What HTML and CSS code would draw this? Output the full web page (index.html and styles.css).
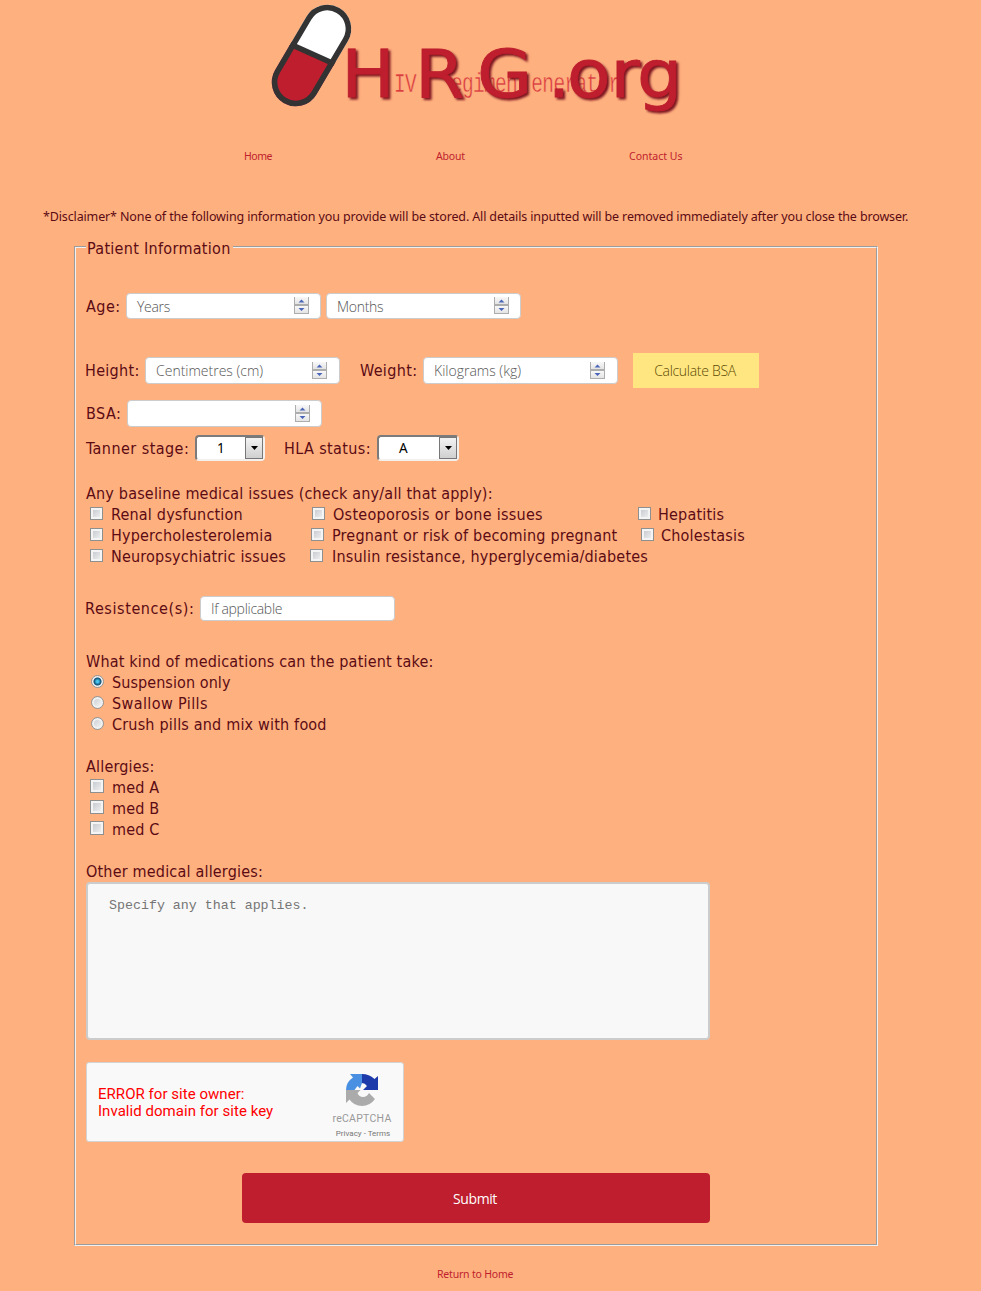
FILE: index.html
```html
<!DOCTYPE html>
<html lang="en">
<head>
<meta charset="utf-8">
<title>HRG.org - HIV Regimen Generator</title>
<link rel="stylesheet" href="styles.css">
</head>
<body>
<svg width="0" height="0" class="defs">
  <defs>
    <linearGradient id="btn" x1="0" y1="0" x2="0" y2="1"><stop offset="0" stop-color="#f8f8f8"/><stop offset="1" stop-color="#e4e4e4"/></linearGradient>
    <symbol id="spin" viewBox="0 0 15 17">
      <rect x="0" y="0" width="15" height="17" fill="#adadad"/>
      <rect x="1" y="0" width="13" height="7" fill="url(#btn)"/>
      <rect x="1" y="9" width="13" height="7" fill="url(#btn)"/>
      <path d="M4.500 5.500h6L7.500 2.500zM4.500 11h6L7.500 14z" fill="#4a66b8"/>
    </symbol>
  </defs>
</svg>
<header>
  <svg class="logo" width="430" height="120" viewBox="260 0 430 120">
    <defs><clipPath id="cap"><rect x="287.500" y="0.500" width="48" height="110" rx="24" transform="rotate(30.500 311.500 55.500)"/></clipPath></defs>
    <g clip-path="url(#cap)">
      <rect x="260" y="0" width="100" height="120" fill="#fff"/>
      <path d="M260 31L360 75V120H260z" fill="#be1e2d"/>
      <path d="M270 35L350 71" stroke="#333" stroke-width="5.500"/>
    </g>
    <rect x="290.300" y="3.300" width="42.400" height="104.400" rx="21.200" transform="rotate(30.500 311.500 55.500)" fill="none" stroke="#333" stroke-width="5.600"/>
    <text class="sub" transform="translate(0 92) scale(.72 1)" x="547.200 562.500 626.400 641.700 657 672.300 687.600 702.900 738 753.300 768.600 783.900 799.200 814.500 829.800 845.100">IVegimenenerator</text>
    <text class="brand" transform="translate(0 96.500) scale(1.080 1)" x="316 384.300 441.700 507 525 565.300 589.800">HRG.org</text>
  </svg>
</header>
<nav><a class="n1">Home</a><a class="n2">About</a><a class="n3">Contact Us</a></nav>
<p class="disclaimer"><span>*Disclaimer* None of the following information you provide will be stored. All details inputted will be removed immediately after you close the browser.</span></p>
<fieldset>
  <legend><span>Patient Information</span></legend>
  <div class="row age">
    <label class="l40"><span>Age:</span></label>
    <div class="field"><span>Years</span><svg><use href="#spin"/></svg></div>
    <div class="field second"><span>Months</span><svg><use href="#spin"/></svg></div>
  </div>
  <div class="row size">
    <label class="l59"><span>Height:</span></label>
    <div class="field"><span class="t-unit">Centimetres (cm)</span><svg><use href="#spin"/></svg></div>
    <label class="weight"><span>Weight:</span></label>
    <div class="field"><span class="t-unit">Kilograms (kg)</span><svg><use href="#spin"/></svg></div>
    <button class="calc"><span>Calculate BSA</span></button>
  </div>
  <div class="row bsa">
    <label class="l41"><span>BSA:</span></label>
    <div class="field"><span></span><svg><use href="#spin"/></svg></div>
  </div>
  <div class="row tanner">
    <label class="l109"><span>Tanner stage:</span></label>
    <div class="select s1"><span>1</span><i><svg width="7" height="4"><path d="M0 0h7L3.500 4z"/></svg></i></div>
    <label class="hla"><span>HLA status:</span></label>
    <div class="select s2"><span>A</span><i><svg width="7" height="4"><path d="M0 0h7L3.500 4z"/></svg></i></div>
  </div>
  <div class="issues">
    <div class="line"><span>Any baseline medical issues (check any/all that apply):</span></div>
    <div class="line"><div class="c1"><b class="box"></b><span>Renal dysfunction</span></div><div class="c2 o2"><b class="box"></b><span class="t-osteo">Osteoporosis or bone issues</span></div><div class="c3"><b class="box"></b><span>Hepatitis</span></div></div>
    <div class="line"><div class="c1"><b class="box"></b><span>Hypercholesterolemia</span></div><div class="c2 o1"><b class="box"></b><span>Pregnant or risk of becoming pregnant</span></div><div class="c3 o3"><b class="box"></b><span>Cholestasis</span></div></div>
    <div class="line"><div class="c1"><b class="box"></b><span>Neuropsychiatric issues</span></div><div class="c2"><b class="box wide"></b><span>Insulin resistance, hyperglycemia/diabetes</span></div></div>
  </div>
  <div class="row resist">
    <label class="l114"><span>Resistence(s):</span></label>
    <div class="field"><span>If applicable</span></div>
  </div>
  <div class="meds">
    <div class="line"><span>What kind of medications can the patient take:</span></div>
    <div class="line opt"><b class="radio on"></b><span class="t-susp">Suspension only</span></div>
    <div class="line opt"><b class="radio"></b><span class="t-swallow">Swallow Pills</span></div>
    <div class="line opt"><b class="radio"></b><span>Crush pills and mix with food</span></div>
  </div>
  <div class="allergies">
    <div class="line"><span>Allergies:</span></div>
    <div class="line opt"><b class="box big"></b><span>med A</span></div>
    <div class="line opt"><b class="box big"></b><span>med B</span></div>
    <div class="line opt"><b class="box big"></b><span>med C</span></div>
  </div>
  <div class="other">
    <div class="line"><span>Other medical allergies:</span></div>
    <div class="area"><span>Specify any that applies.</span></div>
  </div>
  <div class="captcha">
    <p><span>ERROR for site owner:</span><br><span>Invalid domain for site key</span></p>
    <div class="rc">
      <svg width="34" height="34" viewBox="0 0 34 34">
        <path d="M17 1H5l3 3.500Q1 9 1 17h8.500l3-4 2.500 2.500L17 10z" fill="#4a90e2"/>
        <path d="M17 1v9q3 0 5 3l-4 4h15V3l-3.500 3Q24 1 17 1z" fill="#1c3aa9"/>
        <path d="M1 17v13l3.500-3.500Q9 33 17 33q8 0 13-7l-6-6q-2 4-6 4-4 0-5.500-4l3-3z" fill="#ababab"/>
      </svg>
      <span class="name">reCAPTCHA</span>
      <span class="terms">Privacy - Terms</span>
    </div>
  </div>
  <button class="submit"><span>Submit</span></button>
</fieldset>
<footer><a>Return to Home</a></footer>
</body>
</html>
```
FILE: styles.css
```css
* { box-sizing: border-box; }
body { margin: 0; width: 981px; height: 1291px; overflow: hidden; background: #ffb07f; color: #5b0b14; font: 16px/21px "DejaVu Sans Condensed", "DejaVu Sans", sans-serif; letter-spacing: .19px; }
.defs { position: absolute; }
span { white-space: nowrap; }
header { height: 146px; padding-left: 260px; }
.logo { display: block; letter-spacing: 0; }
.brand { font: 66px "DejaVu Sans", sans-serif; fill: #be1e2d; stroke: #be1e2d; stroke-width: .8px; filter: drop-shadow(2px 2px 1px #7d1420); }
.sub { font: 27px "Liberation Mono", monospace; fill: #d83c3f; stroke: #ffb07f; stroke-width: .5px; }
nav { display: flex; padding-left: 244px; height: 60px; font: 10.500px/20px "Noto Sans", sans-serif; letter-spacing: -.2px; color: #be1e2d; }
.n1 { width: 192px; letter-spacing: -.5px; }
.n2 { width: 193px; }
.n3 { letter-spacing: 0; }
.disclaimer { margin: 0; padding-left: 43px; height: 32px; font: 12.500px/21px "Noto Sans", sans-serif; letter-spacing: -.133px; }
fieldset { margin: 0 0 0 74px; width: 804px; height: 1008px; padding: 0 0 0 10px; border: 2px groove #f0f0f0; }
legend { padding: 0 2px 0 1px; height: 18px; line-height: 21px; letter-spacing: .3px; }
.row { display: flex; align-items: center; }
.field { width: 195px; height: 26px; border: 1px solid #ccc; border-radius: 4px; background: #fff; display: flex; align-items: center; justify-content: space-between; padding: 1px 11px 0 10px; font: 300 14px/20px "Open Sans", sans-serif; letter-spacing: -.3px; color: #555; }
.field svg { width: 15px; height: 17px; margin-top: -2px; }
.size .field svg { margin-right: 1px; }
.t-unit { letter-spacing: 0; }
.age { margin-top: 37px; height: 26px; }
.second { margin-left: 5px; }
.size { margin-top: 34px; height: 35px; }
.l40 { width: 40px; letter-spacing: .5px; }
.l59 { width: 60px; margin-left: -1px; letter-spacing: .3px; }
.l41 { width: 41px; letter-spacing: .5px; }
.l109 { width: 109px; letter-spacing: .45px; }
.l114 { width: 115px; margin-left: -1px; letter-spacing: .6px; }
.weight { width: 83px; padding-left: 20px; letter-spacing: .35px; }
.calc { margin-left: 15px; width: 126px; height: 35px; border: 0; padding: 0 2px 0 0; background: #ffe680; color: #5b4a04; font: 300 14px "Open Sans", sans-serif; letter-spacing: -.3px; }
.bsa { margin-top: 12px; height: 27px; }
.tanner { margin-top: 8px; height: 26px; }
.bsa .field, .size .field { height: 27px; }
.select { height: 26px; border: 2px solid; border-color: #7b7b7b #f4f0ee #f4f0ee #7b7b7b; border-radius: 4px; background: #fff; color: #000; display: flex; align-items: center; font: 13.500px "Noto Sans", sans-serif; }
.select span { flex: 1; padding-left: 20px; }
.select i { width: 18px; height: 22px; border: 1px solid #777; background: linear-gradient(#f3f3f3, #d0d0d0); display: flex; align-items: center; justify-content: center; }
.s1 { width: 70px; }
.s2 { width: 82px; }
.hla { width: 112px; padding-left: 19px; letter-spacing: .38px; }
.issues { margin-top: 22px; }
.line { display: flex; align-items: center; height: 21px; }
.c1 { width: 220px; padding-left: 4px; }
.c1, .c2, .c3 { display: flex; align-items: center; }
.c2 { width: 328px; padding-left: 4px; }
.o1 { padding-left: 5px; }
.o2 { padding-left: 6px; }
.t-osteo { letter-spacing: .28px; }
.t-susp { letter-spacing: .08px; }
.t-swallow { letter-spacing: .4px; }
.c3 { padding-left: 4px; }
.o3 { padding-left: 7px; }
.box { flex: none; width: 13px; height: 13px; margin: -2px 8px 0 0; border: 1px solid #8e8f8f; background: linear-gradient(135deg, #bfc3c9, #f6f6f6); box-shadow: inset 0 0 0 2px #f4f4f4; }
.c2 .wide { margin-right: 9px; }
.big { width: 14px; height: 14px; margin-top: -3px; }
.c3 .box { margin-right: 7px; }
.resist { margin-top: 29px; height: 25px; }
.resist .field { height: 25px; }
.meds { margin-top: 30px; }
.opt { padding-left: 4px; }
.radio { flex: none; width: 13px; height: 13px; margin: -2px 8px 0 1px; border: 1px solid #929596; border-radius: 50%; background: linear-gradient(135deg, #c5c8cd, #fafafa); box-shadow: inset 0 0 0 2px #f0f0f0; }
.on { background: radial-gradient(circle, #49c8ef 0 1px, #0e4b73 3.500px, #f0f0f0 4.500px); box-shadow: none; }
.allergies, .other { margin-top: 21px; }
.area { width: 624px; height: 158px; border: 2px solid #ccc; border-radius: 4px; background: #f8f8f8; padding: 12px 21px; font: 13.300px/20px "Liberation Mono", monospace; letter-spacing: 0; color: #757575; }
.captcha { margin-top: 22px; width: 318px; height: 80px; border: 1px solid #d3d3d3; border-radius: 3px; background: #f9f9f9; display: flex; justify-content: space-between; padding-left: 11px; font-family: Roboto, sans-serif; letter-spacing: 0; }
.captcha p { margin: 23px 0 0; color: #f00; font-size: 15px; line-height: 17px; letter-spacing: .04px; }
.rc { width: 82px; display: flex; flex-direction: column; align-items: center; padding-top: 10px; color: #999; }
.name { font-size: 10.500px; line-height: 14px; margin-top: 5px; letter-spacing: .25px; }
.terms { font-size: 8px; line-height: 10px; margin-top: 3px; padding-left: 2px; color: #777; }
.submit { display: block; margin: 31px 0 0 156px; width: 468px; height: 50px; border: 0; padding: 0 2px 0 0; border-radius: 4px; background: #be1e2d; color: #fff; font: 14px "Open Sans", sans-serif; letter-spacing: -.4px; }
footer { padding-left: 437px; font: 10.500px/20px "Noto Sans", sans-serif; letter-spacing: -.2px; color: #be1e2d; margin-top: 18px; }
```
